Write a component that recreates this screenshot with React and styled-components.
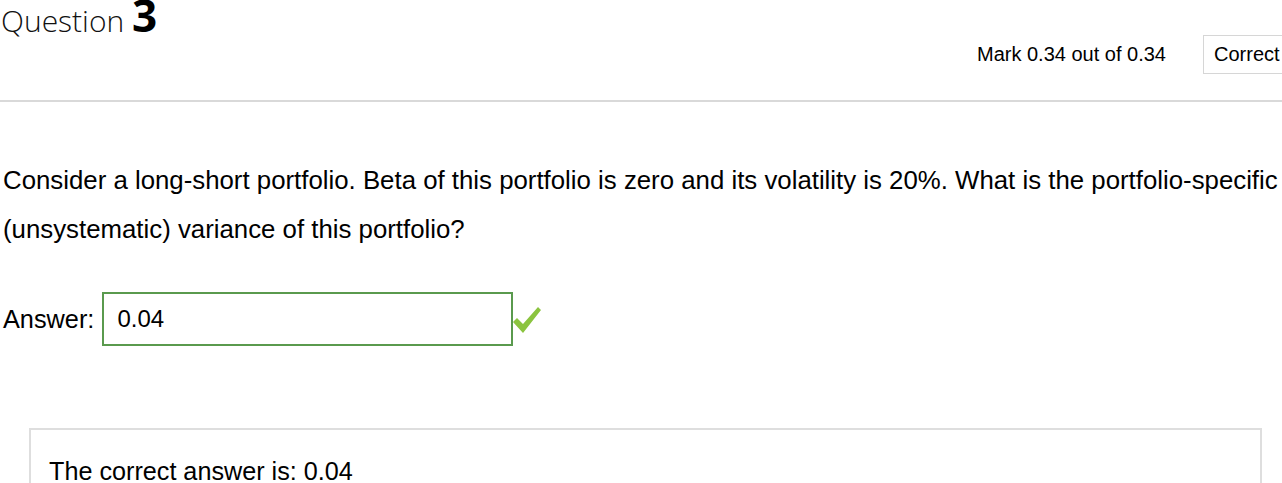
import React from "react";
import styled, { createGlobalStyle } from "styled-components";

const Global = createGlobalStyle`
  html, body { margin: 0; padding: 0; background: #fff; overflow: hidden; }
  body { font-family: "Liberation Sans", Arial, sans-serif; color: #000; }
`;

const Page = styled.div`
  width: 1282px;
  overflow: hidden;
`;

const Header = styled.div`
  display: flex;
  align-items: flex-start;
  height: 102px;
  box-sizing: border-box;
  border-bottom: 2px solid #d9d9d9;
`;

const Title = styled.h3`
  margin: 0;
  padding-left: 1px;
  font-family: "Open Sans", sans-serif;
  font-weight: 300;
  font-size: 30px;
  line-height: 40px;
  margin-top: -5px;
  color: #111;
`;

const Num = styled.span`
  font-weight: 700;
  font-size: 44px;
  color: #000;
`;

const Info = styled.div`
  margin-left: auto;
  margin-top: 35px;
  display: flex;
  align-items: center;
  gap: 37px;
  margin-right: -35px;
`;

const Mark = styled.div`
  font-size: 20px;
`;

const State = styled.div`
  border: 1px solid #d6d6d6;
  height: 39px;
  box-sizing: border-box;
  padding: 0 10px;
  display: flex;
  align-items: center;
  font-size: 20px;
  width: 114px;
`;

const QText = styled.p`
  margin: 54px 0 0;
  padding-left: 3px;
  font-size: 25.8px;
  line-height: 49px;
  white-space: nowrap;
`;

const AnswerRow = styled.div`
  margin-top: 38px;
  padding-left: 3px;
  display: flex;
  align-items: center;
  font-size: 25.3px;
`;

const Label = styled.span`
  margin-right: 8px;
`;

const Input = styled.div`
  width: 411px;
  height: 54px;
  box-sizing: border-box;
  border: 2px solid #5a9a4e;
  display: flex;
  align-items: center;
  padding-left: 13px;
  font-size: 24px;
`;

const Check = styled.svg`
  width: 30px;
  height: 30px;
  margin-left: -1px;
  margin-top: 2px;
`;

const Feedback = styled.div`
  margin: 82px 0 0 29px;
  width: 1233px;
  box-sizing: border-box;
  border: 2px solid #dedede;
  padding: 25px 18px 30px;
  font-size: 25.2px;
  line-height: 32px;
`;

export default function App() {
  return (
    <Page>
      <Global />
      <Header>
        <Title>
          Question <Num>3</Num>
        </Title>
        <Info>
          <Mark>Mark 0.34 out of 0.34</Mark>
          <State>Correct</State>
        </Info>
      </Header>
      <QText>
        Consider a long-short portfolio. Beta of this portfolio is zero and its volatility is 20%. What is the portfolio-specific
        <br />
        (unsystematic) variance of this portfolio?
      </QText>
      <AnswerRow>
        <Label>Answer:</Label>
        <Input>0.04</Input>
        <Check viewBox="0 0 30 30">
          <path d="M1 17 L5 13 L11 19 L26 2 L29 5 L11 28 Z" fill="#8bc43f" />
        </Check>
      </AnswerRow>
      <Feedback>The correct answer is: 0.04</Feedback>
    </Page>
  );
}
